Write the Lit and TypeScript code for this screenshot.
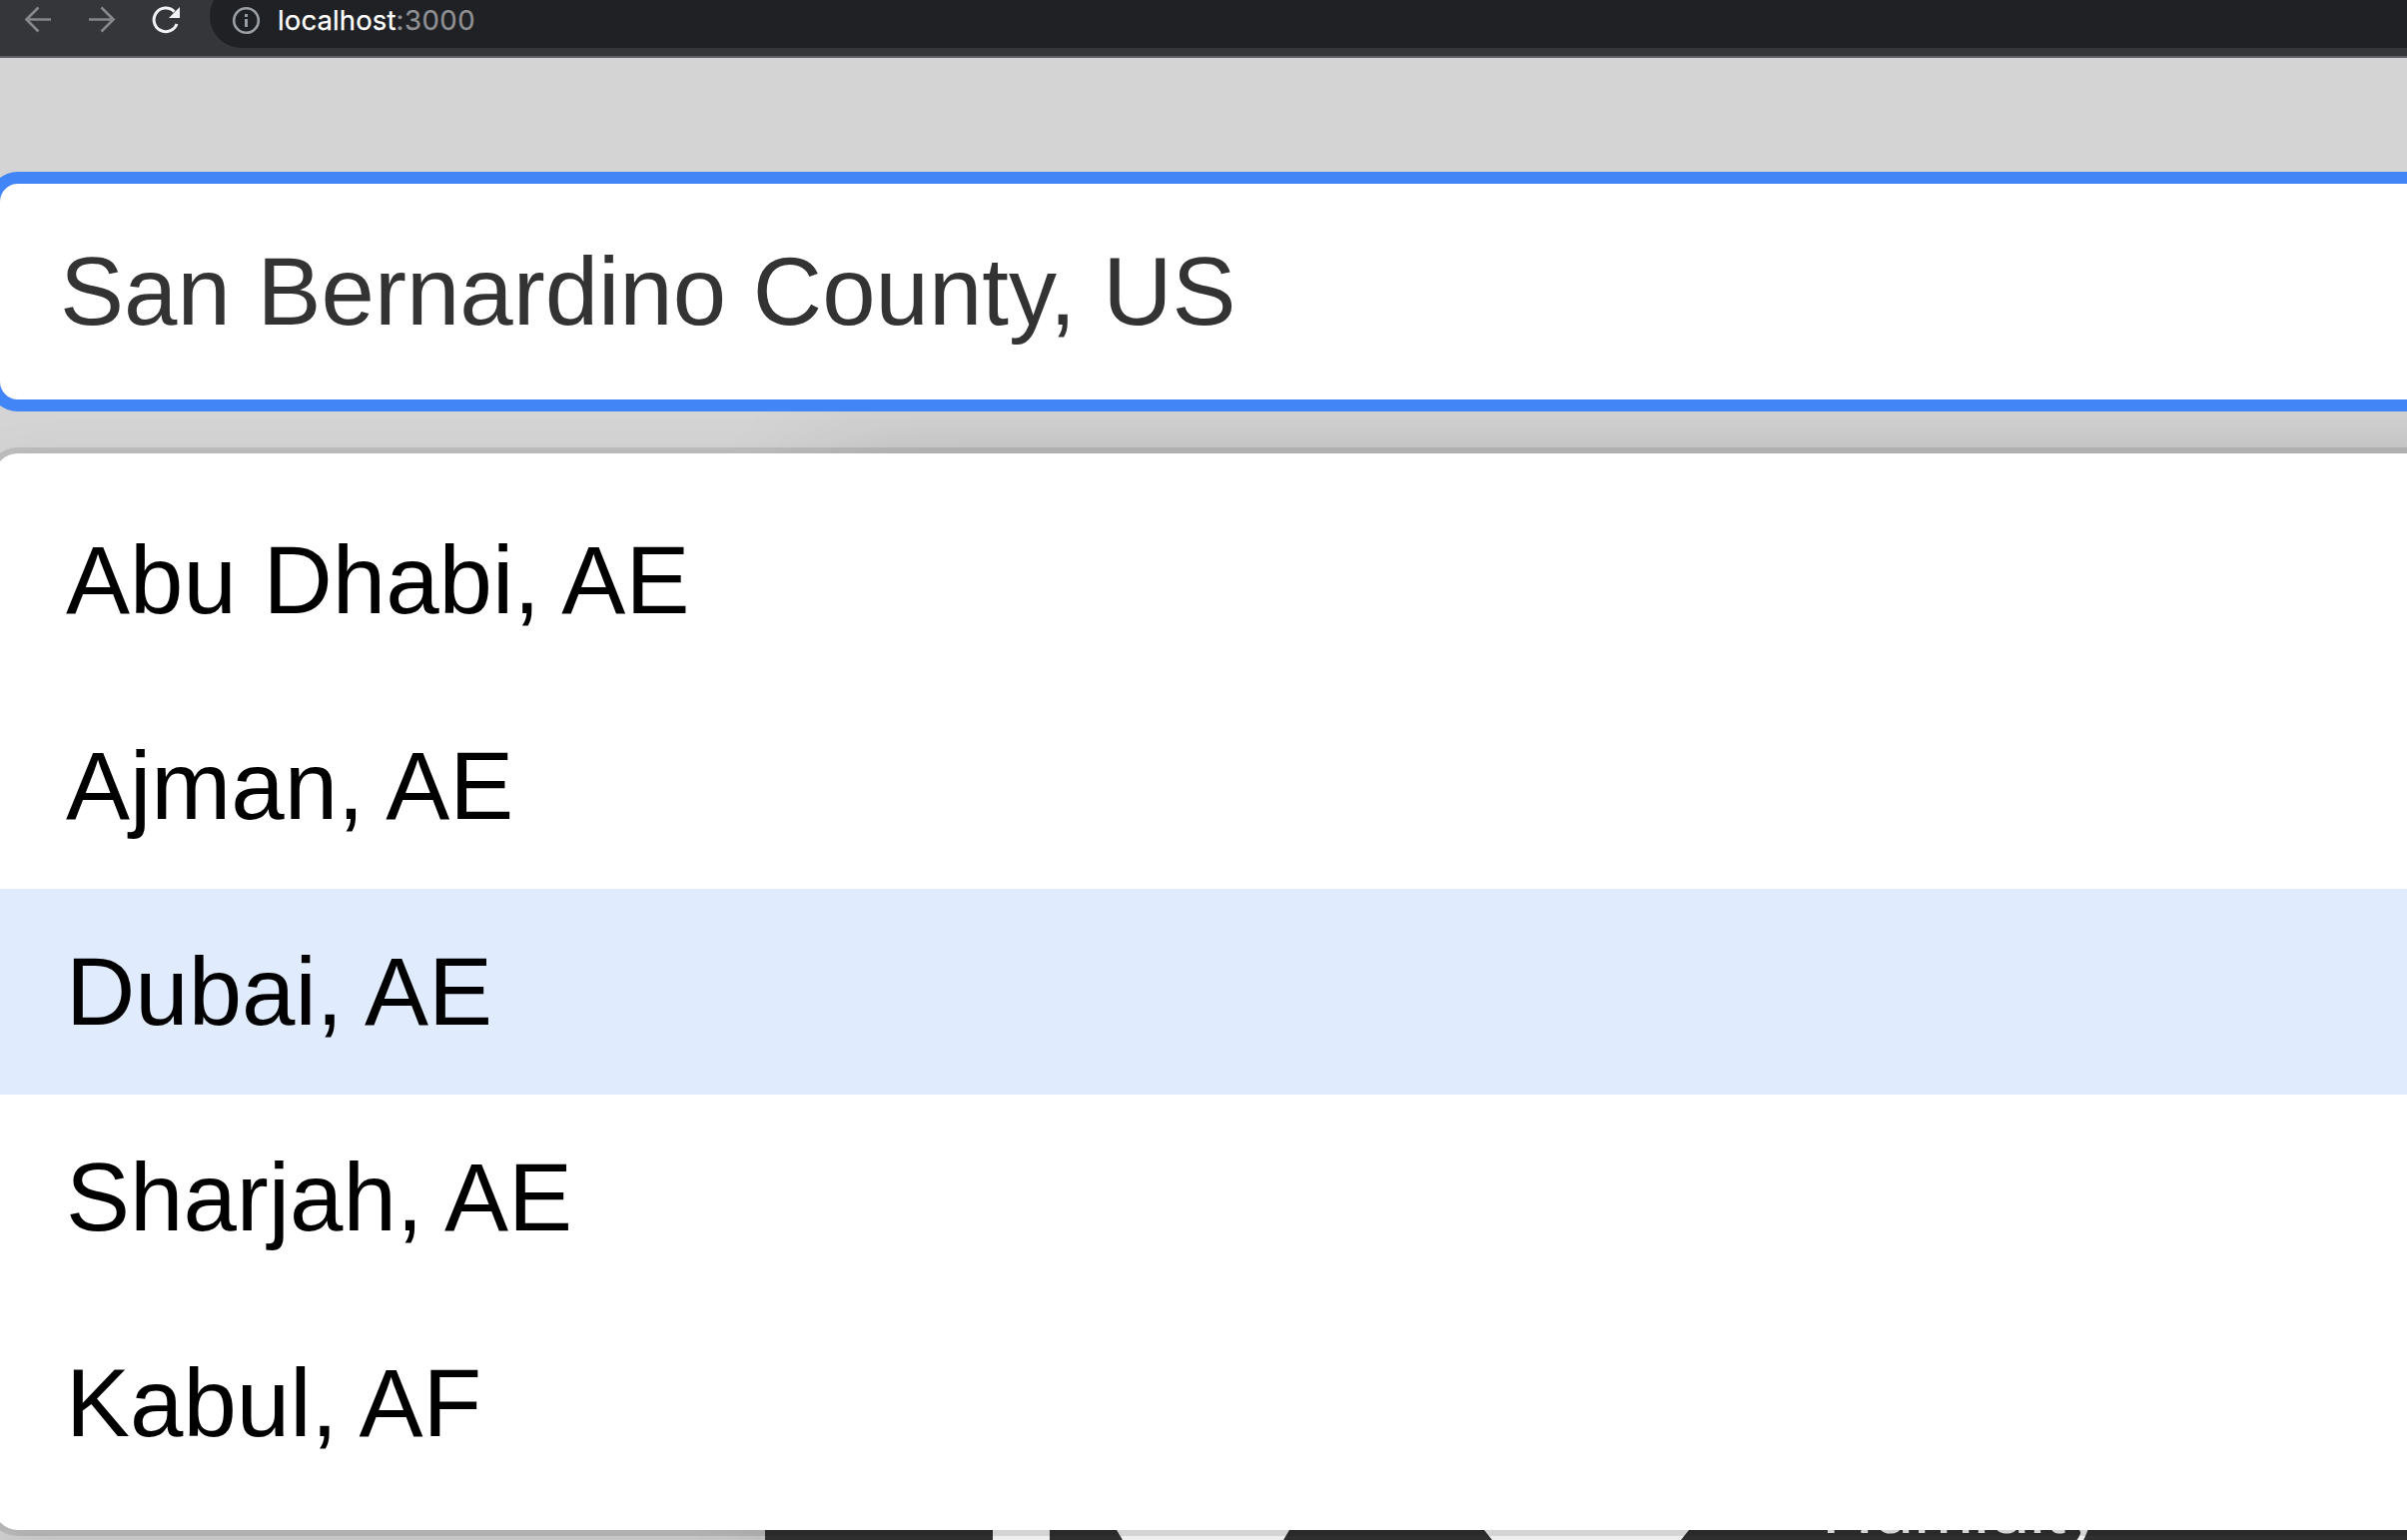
import { LitElement, html, css } from "lit";
import { customElement, state } from "lit/decorators.js";

@customElement("browser-bar")
class BrowserBar extends LitElement {
  static styles = css`
    :host { display: flex; height: 56px; background: #35363a; border-bottom: 2px solid #5f6064; overflow: hidden; flex: none; }
    .nav { width: 210px; height: 56px; flex: none; display: block; }
    .address { flex: 1; height: 64px; margin-top: -16px; box-sizing: border-box; padding: 16px 0 0 22px; border-radius: 32px 0 0 32px; background: #202124; display: flex; align-items: flex-start; }
    .info { width: 30px; height: 42px; flex: none; }
    .url { font: 27.5px/40px Inter, Roboto, sans-serif; color: #fff; margin-left: 16px; letter-spacing: 0.12px; white-space: pre; -webkit-text-stroke: 0.25px; }
    .port { color: #8f9094; letter-spacing: 0.5px; }
  `;
  render() {
    return html`
      <svg class="nav" viewBox="0 0 210 56" fill="none">
        <g stroke="#86878a" stroke-width="2.7">
          <path d="M51 19.5H27M38.500 7.500L26.500 19.500L38.500 31.500" />
          <path d="M89 19.500H113M101.500 7.500L113.500 19.500L101.500 31.500" />
        </g>
        <path d="M177 24A11.800 11.800 0 1 1 174.500 11.700" stroke="#f1f3f4" stroke-width="3" />
        <path d="M180 7V18H169Z" fill="#f1f3f4" />
      </svg>
      <div class="address">
        <svg class="info" viewBox="0 0 30 42" fill="none">
          <circle cx="14.500" cy="20.500" r="12.300" stroke="#9aa0a6" stroke-width="2.600" />
          <path d="M14.500 19V27M14.500 14V17" stroke="#9aa0a6" stroke-width="2.900" />
        </svg>
        <span class="url">localhost<span class="port">:3000</span></span>
      </div>`;
  }
}

@customElement("location-select")
class LocationSelect extends LitElement {
  static styles = css`
    :host { display: block; font: 96px/110px "Liberation Sans", Arial, sans-serif; position: relative; }
    .control { height: 228px; box-sizing: border-box; border: 6px solid #4285f6; border-radius: 24px; background: #fff; box-shadow: 0 0 0 6px #4285f6; padding: 0 60px; display: flex; align-items: center; color: #333; white-space: pre; }
    .menu { margin-top: 48px; padding: 24px 0; border-radius: 24px; background: #fff; box-shadow: 0 0 0 6px rgba(0, 0, 0, 0.1), 0 24px 66px rgba(0, 0, 0, 0.1); }
    .option { height: 206px; box-sizing: border-box; padding: 48px 72px; color: #000; white-space: pre; }
    .focused { background: #e0ebfd; }
  `;
  @state() private options = ["Abu Dhabi, AE", "Ajman, AE", "Dubai, AE", "Sharjah, AE", "Kabul, AF"];
  @state() private focusedIndex = 2;
  render() {
    return html`
      <div class="control">San Bernardino County, US</div>
      <div class="menu">
        ${this.options.map((o, i) => html`<div class="option ${i === this.focusedIndex ? "focused" : ""}">${o}</div>`)}
      </div>`;
  }
}

@customElement("weather-card")
class WeatherCard extends LitElement {
  static styles = css`
    :host { display: block; width: 1800px; height: 1200px; background: #333; box-shadow: 60px -12px 120px rgba(0, 0, 0, 0.2); }
    svg { display: block; width: 1800px; height: 1200px; }
    text { font: 72px "Liberation Sans", Arial, sans-serif; }
  `;
  render() {
    return html`
      <svg viewBox="766 500 1800 1200" fill="#fff">
        <path d="M994 1400H1051V1600H994Z" />
        <path d="M1118 1532L1124 1542H1285L1291 1532Z" />
        <path d="M1486 1532L1494 1542H1683L1691 1532Z" />
        <text x="1824" y="1535">Humidity</text>
      </svg>`;
  }
}

@customElement("app-root")
class AppRoot extends LitElement {
  static styles = css`
    :host { display: flex; flex-direction: column; width: 2410px; height: 1542px; overflow: hidden; background: #d4d4d4; }
    .page { flex: 1; min-height: 0; position: relative; overflow: hidden; padding-top: 120px; }
    .select { margin: 0 -60px 0 -6px; }
    .card { position: absolute; left: 766px; top: 442px; }
  `;
  render() {
    return html`
      <browser-bar></browser-bar>
      <main class="page">
        <weather-card class="card"></weather-card>
        <location-select class="select"></location-select>
      </main>`;
  }
}
